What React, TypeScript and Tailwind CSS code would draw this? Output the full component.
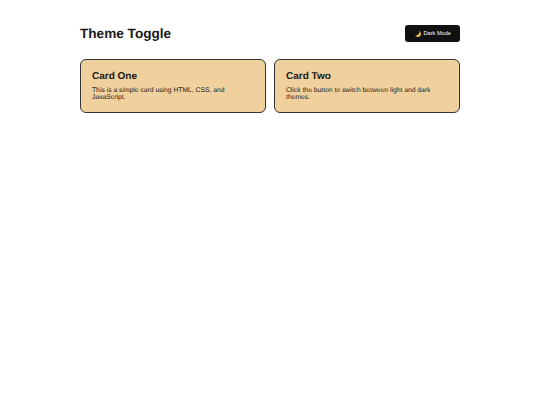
export default function App() {
  return (
    <div className="min-h-[405px] bg-white px-20 pt-[25px] font-['Liberation_Sans',Arial,sans-serif] text-[#1a1a1a] antialiased [text-rendering:geometricPrecision]">
      <header className="mb-[17px] flex h-[17px] items-center justify-between">
        <h1 className="pt-[0.500px] text-[13.600px] leading-[17px] font-bold">Theme Toggle</h1>
        <button className="flex h-[17px] w-[55px] items-center justify-center gap-[1.500px] rounded-[3px] bg-[#111] text-[5.600px] text-white">
          <svg width="8" height="8" viewBox="0 0 16 16">
            <path d="M10.500 1.500c1.500 4.500-1.500 9.500-8 9.500 1.500 3 6.500 4 9.500 1.500 3-2.500 2.500-8.500-1.500-11z" fill="#f2c14e" />
          </svg>
          <span>Dark Mode</span>
        </button>
      </header>
      <main className="grid grid-cols-2 gap-[8px]">
        <section className="h-[53.500px] rounded-[6px] border border-[#333] bg-[#f0d19e] px-[11px] pt-[10.500px]">
          <h2 className="mb-[4px] text-[10px] leading-[12px] font-bold">Card One</h2>
          <p className="text-[6.750px] leading-[7px]">This is a simple card using HTML, CSS, and JavaScript.</p>
        </section>
        <section className="h-[53.500px] rounded-[6px] border border-[#333] bg-[#f0d19e] px-[11px] pt-[10.500px]">
          <h2 className="mb-[4px] text-[10px] leading-[12px] font-bold">Card Two</h2>
          <p className="text-[6.750px] leading-[7px]">Click the button to switch between light and dark themes.</p>
        </section>
      </main>
    </div>
  );
}
